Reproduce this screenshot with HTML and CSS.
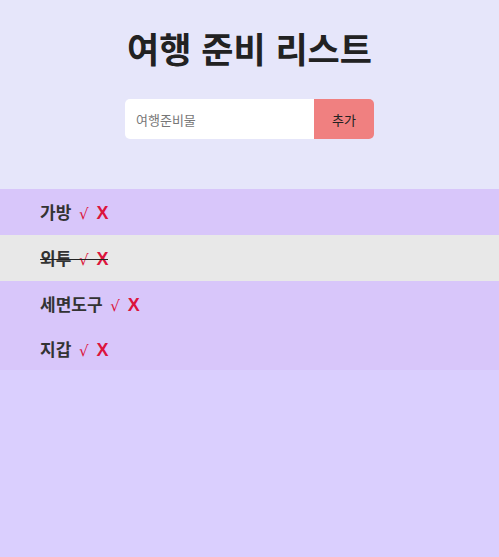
FILE: index.html
```html
<!DOCTYPE html>
<html lang="ko">
<head>
<meta charset="utf-8">
<link rel="stylesheet" href="styles.css">
</head>
<body>
<header class="top">
  <h1 class="title">여행 준비 리스트</h1>
  <form class="add-form">
    <input class="add-input" type="text" placeholder="여행준비물">
    <button class="add-btn" type="button">추가</button>
  </form>
</header>
<ul class="list">
  <li class="item"><span class="text">가방 <span class="mark check">√</span> <span class="mark">X</span></span></li>
  <li class="item done"><span class="text">외투 <span class="mark check">√</span> <span class="mark">X</span></span></li>
  <li class="item"><span class="text">세면도구 <span class="mark check">√</span> <span class="mark">X</span></span></li>
  <li class="item"><span class="text">지갑 <span class="mark check">√</span> <span class="mark">X</span></span></li>
</ul>
</body>
</html>
```
FILE: styles.css
```css
html, body {
  margin: 0;
  padding: 0;
}
body {
  background: #dacffe;
  font-family: "Noto Sans CJK KR", "Noto Sans", sans-serif;
  color: #333;
  min-height: 557px;
}
.top {
  background: #e6e6fa;
  height: 189px;
  box-sizing: border-box;
  padding-top: 25px;
  display: flex;
  flex-direction: column;
  align-items: center;
}
.title {
  margin: 0;
  font-size: 35px;
  font-weight: 700;
  line-height: 46px;
  color: #222;
}
.add-form {
  margin-top: 28px;
  display: flex;
}
.add-input {
  width: 189px;
  height: 40px;
  box-sizing: border-box;
  border: none;
  border-radius: 5px 0 0 5px;
  padding: 0 11px;
  font-family: inherit;
  font-size: 13px;
  background: #fff;
  outline: none;
}
.add-input::placeholder {
  color: #777;
}
.add-btn {
  width: 60px;
  height: 40px;
  border: none;
  border-radius: 0 5px 5px 0;
  background: #f08080;
  font-family: inherit;
  font-size: 13px;
  color: #222;
  padding: 0;
}
.list {
  list-style: none;
  margin: 0;
  padding: 0;
  background: #d8c6fa;
}
.item {
  height: 46px;
  line-height: 46px;
  padding-left: 40px;
  font-size: 17px;
  font-weight: 600;
  word-spacing: 3px;
}
.item:last-child {
  height: 43px;
  line-height: 43px;
}
.text {
  position: relative;
}
.mark {
  color: #dc143c;
  font-family: "Liberation Sans", sans-serif;
  font-weight: 700;
  font-size: 18px;
}
.check {
  font-family: "DejaVu Sans", sans-serif;
  font-weight: 400;
  font-size: 15px;
}
.done {
  background: #e8e8e8;
}
.done .text::after {
  content: "";
  position: absolute;
  left: 0;
  right: 0;
  top: 50%;
  margin-top: 1px;
  height: 1.5px;
  background: #222;
}
```
